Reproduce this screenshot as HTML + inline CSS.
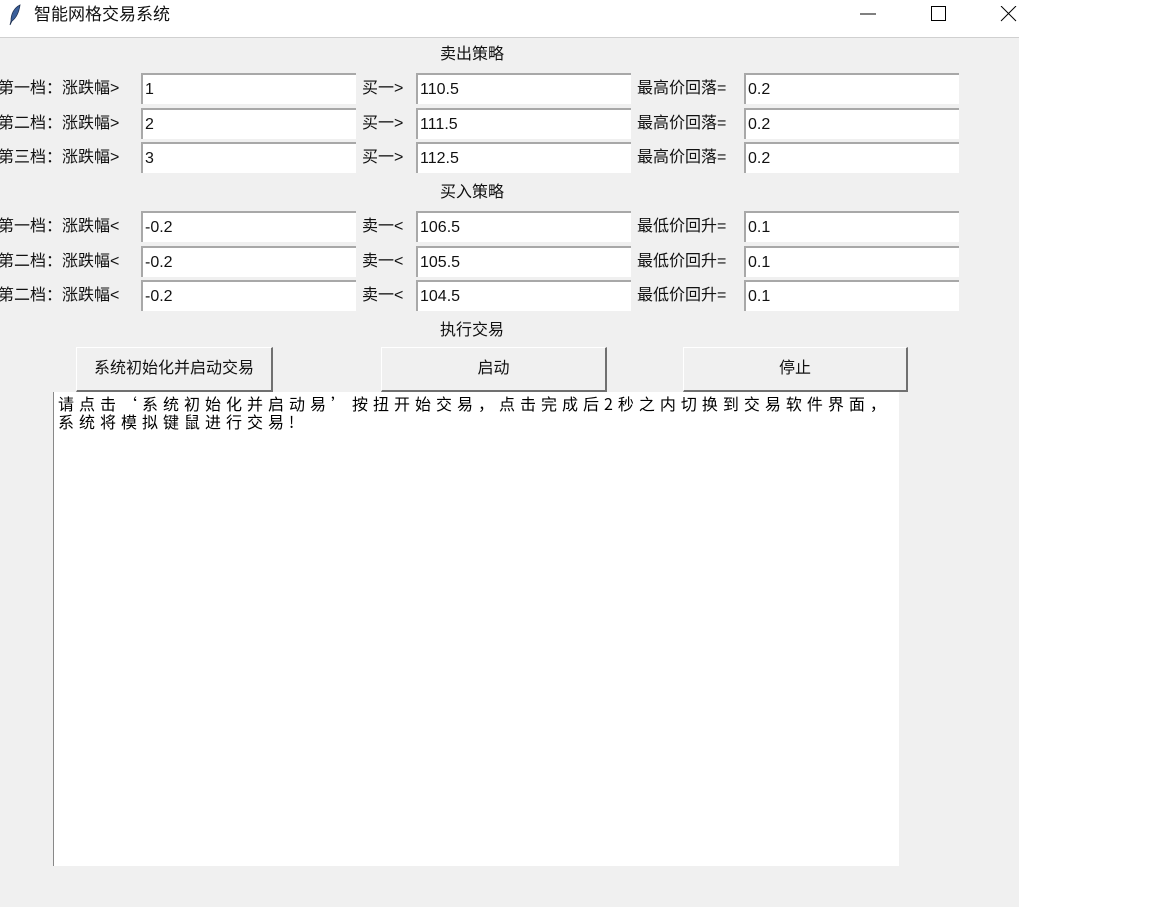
<!DOCTYPE html>
<html><head><meta charset="utf-8"><style>
body{margin:0;width:1152px;height:907px;background:#fff;position:relative;overflow:hidden;font-family:"Liberation Sans","Microsoft YaHei","Noto Sans CJK SC",sans-serif;}
.win{position:absolute;left:0;top:38px;width:1019px;height:869px;background:#f0f0f0;}
.title{position:absolute;left:0;top:0;width:1019px;height:37px;background:#fff;border-bottom:1px solid #d0d0d0;}
.t{position:absolute;font-size:16px;color:#111;white-space:nowrap;line-height:20px;}
.e{position:absolute;height:31px;width:215px;background:#fff;border-top:2px solid #a8a8a8;border-left:2px solid #a8a8a8;box-sizing:border-box;font-size:16px;line-height:29px;padding-left:2px;color:#111;}
.b{position:absolute;height:45px;background:#f0f0f0;box-sizing:border-box;border:1px solid #fff;border-right:2px solid #707070;border-bottom:2px solid #707070;font-size:16px;text-align:center;line-height:42px;color:#111;}
.ta{position:absolute;left:53px;top:392px;width:846px;height:474px;background:#fff;border-left:1px solid #888;box-sizing:border-box;padding:2px 0 0 4px;font-family:"WenQuanYi Zen Hei","Noto Sans CJK SC",sans-serif;font-size:16px;line-height:18px;letter-spacing:5px;color:#000;}
</style></head><body>
<div class="title">
<svg style="position:absolute;left:8px;top:4px" width="14" height="22" viewBox="0 0 14 22"><path d="M12 1 C6 4 3 10 3 17 L2 21 L4 17 C8 14 11 8 12 1Z" fill="#3a5f9a" stroke="#1d2f50" stroke-width="0.8"/></svg>
<div class="t" style="left:34px;top:5px;font-size:17px">智能网格交易系统</div>
<svg style="position:absolute;left:860px;top:6px" width="160" height="16"><line x1="0" y1="8" x2="16" y2="8" stroke="#000"/><rect x="71.5" y="0.5" width="14" height="14" fill="none" stroke="#000"/><path d="M141 0 L156 15 M156 0 L141 15" stroke="#000"/></svg>
</div>
<div class="win"></div>
<div class="t" style="left:440px;top:45px">卖出策略</div>
<div class="t" style="left:-2px;top:79px">第一档：涨跌幅&gt;</div>
<div class="t" style="left:-2px;top:114px">第二档：涨跌幅&gt;</div>
<div class="t" style="left:-2px;top:148px">第三档：涨跌幅&gt;</div>
<div class="e" style="left:141px;top:73px">1</div><div class="e" style="left:141px;top:108px">2</div><div class="e" style="left:141px;top:142px">3</div>
<div class="t" style="left:362px;top:79px">买一&gt;</div><div class="t" style="left:362px;top:114px">买一&gt;</div><div class="t" style="left:362px;top:148px">买一&gt;</div>
<div class="e" style="left:416px;top:73px">110.5</div><div class="e" style="left:416px;top:108px">111.5</div><div class="e" style="left:416px;top:142px">112.5</div>
<div class="t" style="left:637px;top:79px">最高价回落=</div><div class="t" style="left:637px;top:114px">最高价回落=</div><div class="t" style="left:637px;top:148px">最高价回落=</div>
<div class="e" style="left:744px;top:73px">0.2</div><div class="e" style="left:744px;top:108px">0.2</div><div class="e" style="left:744px;top:142px">0.2</div>
<div class="t" style="left:440px;top:183px">买入策略</div>
<div class="t" style="left:-2px;top:217px">第一档：涨跌幅&lt;</div>
<div class="t" style="left:-2px;top:252px">第二档：涨跌幅&lt;</div>
<div class="t" style="left:-2px;top:286px">第二档：涨跌幅&lt;</div>
<div class="e" style="left:141px;top:211px">-0.2</div><div class="e" style="left:141px;top:246px">-0.2</div><div class="e" style="left:141px;top:280px">-0.2</div>
<div class="t" style="left:362px;top:217px">卖一&lt;</div><div class="t" style="left:362px;top:252px">卖一&lt;</div><div class="t" style="left:362px;top:286px">卖一&lt;</div>
<div class="e" style="left:416px;top:211px">106.5</div><div class="e" style="left:416px;top:246px">105.5</div><div class="e" style="left:416px;top:280px">104.5</div>
<div class="t" style="left:637px;top:217px">最低价回升=</div><div class="t" style="left:637px;top:252px">最低价回升=</div><div class="t" style="left:637px;top:286px">最低价回升=</div>
<div class="e" style="left:744px;top:211px">0.1</div><div class="e" style="left:744px;top:246px">0.1</div><div class="e" style="left:744px;top:280px">0.1</div>
<div class="t" style="left:440px;top:321px">执行交易</div>
<div class="b" style="left:76px;top:347px;width:197px">系统初始化并启动交易</div>
<div class="b" style="left:381px;top:347px;width:226px">启动</div>
<div class="b" style="left:683px;top:347px;width:225px">停止</div>
<div class="ta">请点击‘系统初始化并启动易’按扭开始交易，点击完成后2秒之内切换到交易软件界面，<br>系统将模拟键鼠进行交易!</div>
</body></html>
